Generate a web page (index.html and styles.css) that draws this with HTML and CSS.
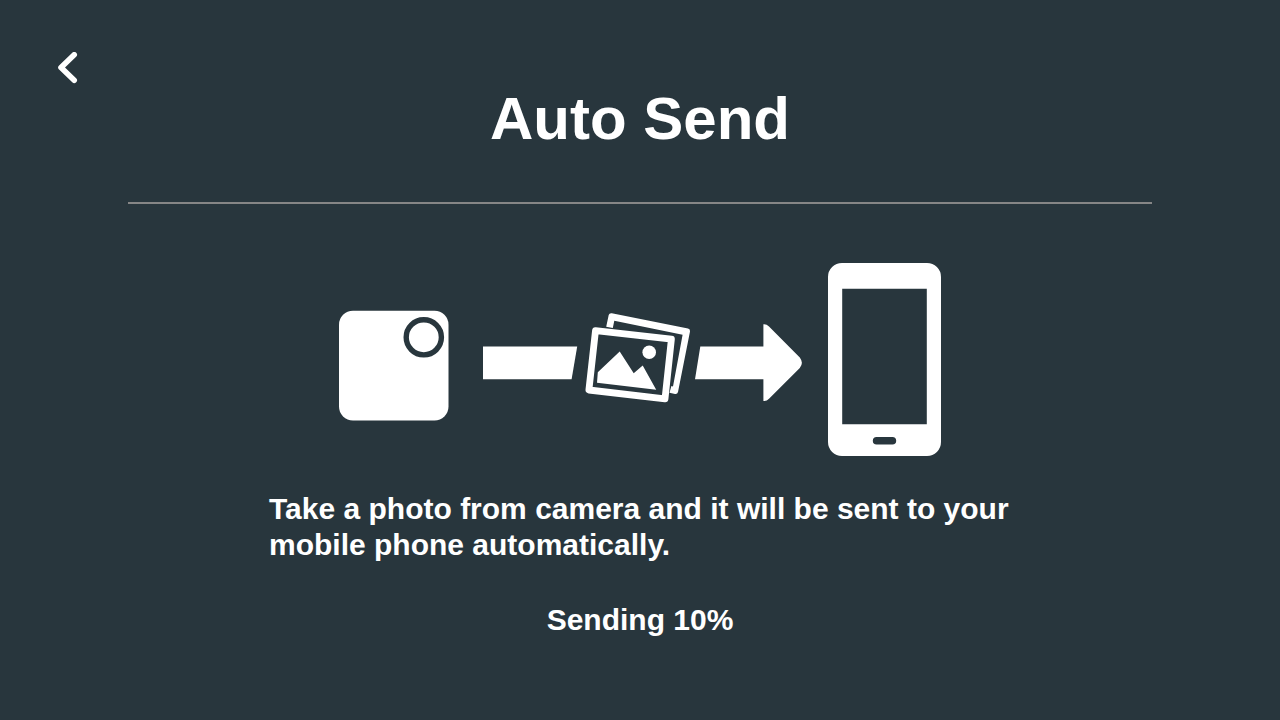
FILE: index.html
```html
<!DOCTYPE html>
<html lang="en">
<head>
<meta charset="utf-8">
<meta name="viewport" content="width=device-width, initial-scale=1">
<title>Auto Send</title>
<link rel="stylesheet" href="styles.css">
</head>
<body class="screen">
  <nav class="nav">
    <button class="back" type="button" aria-label="Back">
      <svg class="back-icon" viewBox="0 0 20 32" aria-hidden="true"><path d="M16.2 2.8 3 15.5 16.2 28.2"/></svg>
    </button>
  </nav>
  <header class="header">
    <h1 class="title">Auto Send</h1>
  </header>
  <main class="content">
    <svg class="diagram" viewBox="339 263 602 193" role="img" aria-label="Photos move from the camera to the phone">
      <!-- camera -->
      <rect x="339" y="310.7" width="109.5" height="109.8" rx="14"/>
      <circle class="lens" cx="423.8" cy="337.3" r="17.6"/>
      <!-- arrow -->
      <path d="M483 346.5H577.2L571.6 379.3H483Z"/>
      <path d="M700.3 346.5H763.4V324.2Q766.4 323.8 769 326.4L799.8 357.4Q804 363 799.8 368L769 398.8Q766.4 401.6 763.4 401V379.3H695Z"/>
      <!-- photos -->
      <path d="M606.2 326.7 608.7 315Q609.3 312.8 611.8 313.2L688 328.4Q690.4 329 690 331.4L678 392Q677.4 394.4 675 394L669.5 392.8 671.4 386 673 386.4 682.6 334.7 614.3 320.8 612.8 328Z"/>
      <path class="frame" d="M595.5 330.7 671.4 339.2 665 398.8 588.9 390Z"/>
      <path d="M597.8 372.2 619.7 351.6 633.7 373.2 642.7 365.4 656.2 389.8 597 382.8Z"/>
      <circle cx="649.2" cy="352.3" r="6.8"/>
      <!-- phone -->
      <path fill-rule="evenodd" d="M842 263H927A14 14 0 0 1 941 277V442A14 14 0 0 1 927 456H842A14 14 0 0 1 828 442V277A14 14 0 0 1 842 263ZM842.2 288.8V424.2H926.8V288.8ZM876.6 437A3.7 3.7 0 0 0 876.6 444.6H892.4A3.7 3.7 0 0 0 892.4 437Z"/>
    </svg>
    <p class="message">Take a photo from camera and it will be sent to your mobile phone automatically.</p>
    <p class="status" role="status">Sending 10%</p>
  </main>
</body>
</html>
```
FILE: styles.css
```css
* {
  box-sizing: border-box;
}

.screen {
  margin: 0;
  min-height: 100vh;
  background: #28363d;
  color: #fff;
  font-family: "Liberation Sans", Arial, sans-serif;
  font-weight: 700;
}

.nav {
  display: flex;
  padding: 52px 58px 0;
}

.back {
  display: flex;
  padding: 0;
  border: 0;
  background: none;
  cursor: pointer;
}

.back-icon {
  width: 20px;
  height: 32px;
  fill: none;
  stroke: #fff;
  stroke-width: 5.6;
  stroke-linecap: round;
  stroke-linejoin: round;
}

.header {
  margin: 0 10%;
  padding-bottom: 48px;
  border-bottom: 2px solid #868686;
}

.title {
  margin: 0;
  font-size: 60px;
  line-height: 70px;
  text-align: center;
}

.content {
  display: flex;
  flex-direction: column;
  align-items: center;
  padding: 59px 24px 40px;
}

.diagram {
  width: 602px;
  max-width: 100%;
  fill: #fff;
}

.lens {
  stroke: #28363d;
  stroke-width: 5.4;
}

.frame {
  fill: #28363d;
  stroke: #fff;
  stroke-width: 6.8;
  stroke-linejoin: round;
}

.message,
.status {
  margin: 0;
  font-size: 30px;
  line-height: 36px;
}

.message {
  max-width: 742px;
  margin: 35px 0 39px;
}
```
